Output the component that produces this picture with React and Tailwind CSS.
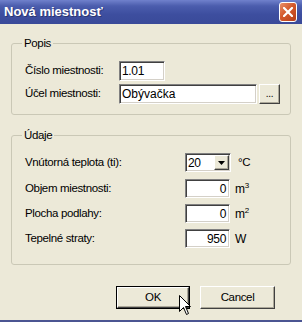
import React from "react";

const sunken =
  "bg-white border border-t-[#808080] border-l-[#808080] border-b-white border-r-white shadow-[inset_1px_1px_0_#404040,inset_-1px_-1px_0_#d4d0c8]";
const raised =
  "bg-[#ece9d8] border border-t-white border-l-white border-b-[#404040] border-r-[#404040] shadow-[inset_-1px_-1px_0_#aca899]";

const Field = ({ label, value, unit, width = "w-[45px]" }) => (
  <div className="flex items-center h-[19px]">
    <span className="w-[160px] shrink-0">{label}</span>
    <div className={`${sunken} ${width} h-[19px] flex items-center justify-end pr-[3px] text-[12px]`}>
      {value}
    </div>
    <span className="ml-[5px] text-[12px]">{unit}</span>
  </div>
);

const Cursor = () => (
  <svg
    className="absolute left-[179px] top-[295px]"
    width="13"
    height="21"
    viewBox="0 0 13 21"
  >
    <path
      d="M0.5 0.5 L0.5 16.5 L4.5 12.5 L7.5 19.5 L9.5 18.5 L6.5 11.5 L11.5 11.5 Z"
      fill="#fff"
      stroke="#000"
      strokeWidth="1"
    />
  </svg>
);

export default function App() {
  return (
    <div className="relative w-[302px] h-[322px] overflow-hidden bg-[#ece9d8] flex flex-col font-['Liberation_Sans',Arial,sans-serif] text-[11.5px] tracking-[-0.35px] text-black">
      {/* title bar */}
      <div className="h-[24px] shrink-0 flex items-center justify-between pl-[4px] pr-[5px] bg-[linear-gradient(to_bottom,#7081cc_0%,#4b5dad_25%,#3d4e9f_60%,#3a4a99_100%)]">
        <span className="text-white font-bold text-[13px] tracking-normal [text-shadow:1px_1px_0_#2a3670]">
          Nová miestnosť
        </span>
        <div className="w-[18px] h-[20px] rounded-[3px] border border-white bg-[linear-gradient(135deg,#e9906a_0%,#d4592c_45%,#b73f1a_100%)] flex items-center justify-center">
          <svg width="10" height="10" viewBox="0 0 10 10">
            <path d="M1 1 L9 9 M9 1 L1 9" stroke="#fff" strokeWidth="2.2" strokeLinecap="square" />
          </svg>
        </div>
      </div>

      {/* body */}
      <div className="flex-1 flex flex-col px-[11px]">
        <fieldset className="mt-[12px] border border-[#cac8b6] rounded-[3px] pl-[13px] pt-[11px] pb-[10px]">
          <legend className="-ml-[3px] px-[2px] leading-[14px]">Popis</legend>
          <div className="flex flex-col gap-[3px]">
            <div className="flex items-center h-[20px]">
              <span className="w-[94px] shrink-0">Číslo miestnosti:</span>
              <div className={`${sunken} w-[46px] h-[20px] flex items-center pl-[2px] text-[12px]`}>1.01</div>
            </div>
            <div className="flex items-center h-[20px]">
              <span className="w-[94px] shrink-0">Účel miestnosti:</span>
              <div className={`${sunken} w-[138px] h-[20px] flex items-center pl-[2px] text-[12px] tracking-normal`}>Obývačka</div>
              <div className={`${raised} ml-[2px] w-[21px] h-[20px] flex items-end justify-center pb-[4px] leading-none text-[10px]`}>
                ...
              </div>
            </div>
          </div>
        </fieldset>

        <fieldset className="mt-[13px] border border-[#cac8b6] rounded-[3px] pl-[13px] pt-[11px] pb-[16px]">
          <legend className="-ml-[3px] px-[2px] leading-[14px]">Údaje</legend>
          <div className="flex flex-col gap-[6px]">
            <div className="flex items-center h-[19px] mb-[1px]">
              <span className="w-[160px] shrink-0">Vnútorná teplota (ti):</span>
              <div className={`${sunken} w-[46px] h-[19px] flex items-center justify-between pl-[2px] pr-[1px] text-[12px]`}>
                <span>20</span>
                <div className={`${raised} w-[15px] h-[15px] flex items-center justify-center`}>
                  <svg width="7" height="4" viewBox="0 0 7 4">
                    <path d="M0 0 H7 L3.5 4 Z" fill="#000" />
                  </svg>
                </div>
              </div>
              <span className="ml-[7px]">°C</span>
            </div>
            <Field label="Objem miestnosti:" value="0" unit={<>m<sup className="text-[8px] -top-[5px]">3</sup></>} />
            <Field label="Plocha podlahy:" value="0" unit={<>m<sup className="text-[8px] -top-[5px]">2</sup></>} />
            <Field label="Tepelné straty:" value="950" unit="W" />
          </div>
        </fieldset>

        <div className="mt-[21px] flex justify-end gap-[10px] pr-[16px]">
          <div className="w-[74px] h-[23px] border border-black">
            <div className={`${raised} w-full h-full flex items-center justify-center`}>OK</div>
          </div>
          <div className={`${raised} w-[75px] h-[23px] flex items-center justify-center`}>Cancel</div>
        </div>
      </div>

      <div className="h-[2px] shrink-0 bg-[#4b5592]" />
      <Cursor />
    </div>
  );
}
